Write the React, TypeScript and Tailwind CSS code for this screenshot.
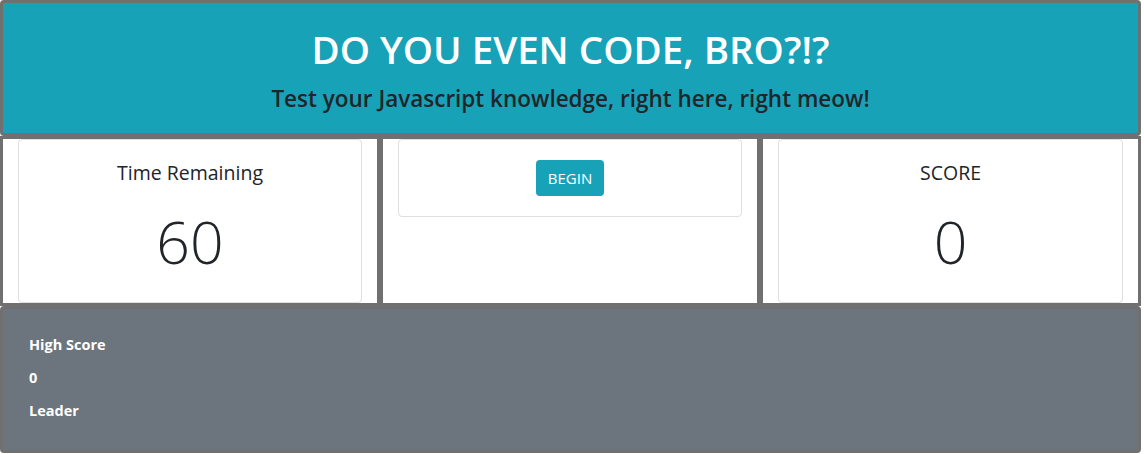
export default function App() {
  const font = { fontFamily: '"Open Sans", "Noto Sans", sans-serif' };

  return (
    <div className="w-[1141px] bg-white text-[#212529]" style={font}>
      {/* Header */}
      <div className="border-[3px] border-[#707070] rounded bg-[#17a2b8] h-[136px] flex flex-col items-center pt-[22px]">
        <h1 className="text-[38.5px] leading-[48px] font-semibold text-white">DO YOU EVEN CODE, BRO?!?</h1>
        <h4 className="mt-[10px] text-[22.5px] leading-[32px] font-semibold text-[#212529]">
          Test your Javascript knowledge, right here, right meow!
        </h4>
      </div>

      {/* Timer / begin / score */}
      <div className="flex">
        <div className="w-[380px] h-[170px] border-[3px] border-[#707070] px-[15px]">
          <div className="h-[164px] border border-[#dfdfdf] rounded flex flex-col items-center pt-[18px]">
            <h5 className="text-[19.5px] leading-[30px]">Time Remaining</h5>
            <div className="mt-[15px] text-[59px] leading-[76px] font-light">60</div>
          </div>
        </div>
        <div className="w-[380px] h-[170px] border-[3px] border-[#707070] px-[15px]">
          <div className="h-[78px] border border-[#dfdfdf] rounded flex justify-center pt-[20px]">
            <button className="h-[36px] px-[12px] rounded bg-[#17a2b8] text-white text-[15px] leading-[36px]">
              BEGIN
            </button>
          </div>
        </div>
        <div className="w-[381px] h-[170px] border-[3px] border-[#707070] px-[15px]">
          <div className="h-[164px] border border-[#dfdfdf] rounded flex flex-col items-center pt-[18px]">
            <h5 className="text-[19.5px] leading-[30px]">SCORE</h5>
            <div className="mt-[15px] text-[59px] leading-[76px] font-light">0</div>
          </div>
        </div>
      </div>

      {/* High score */}
      <div className="h-[147px] border-[3px] border-[#707070] rounded bg-[#6c757d] pl-[26px] pt-[25px] text-white text-[14.5px] font-bold">
        <p className="leading-[21px]">High Score</p>
        <p className="mt-[12px] leading-[21px]">0</p>
        <p className="mt-[12px] leading-[21px]">Leader</p>
      </div>
    </div>
  );
}
